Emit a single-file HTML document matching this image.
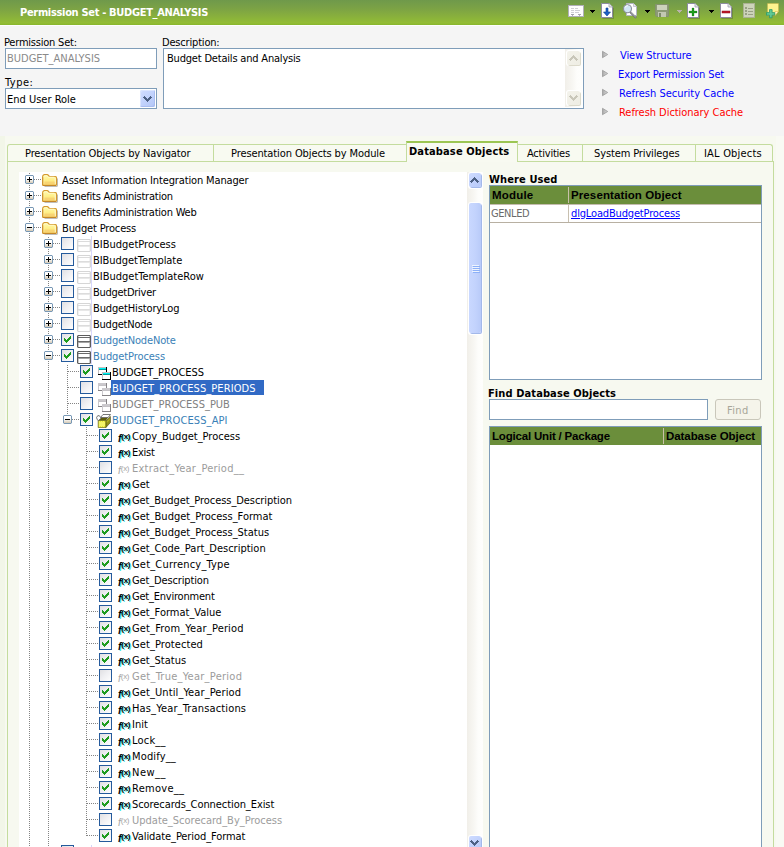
<!DOCTYPE html><html><head><meta charset="utf-8"><title>Permission Set</title><style>
*{box-sizing:border-box;margin:0;padding:0}
html,body{width:784px;height:847px;overflow:hidden}
body{background:#f5f5f5;font-family:"DejaVu Sans Condensed","Liberation Sans",sans-serif;font-size:11px;color:#000;position:relative;line-height:16px}
.a{position:absolute;white-space:nowrap}
.t{position:absolute;white-space:nowrap;height:18px;line-height:18px}
.b{font-weight:bold}
.ar{font-family:"Liberation Sans",sans-serif;font-weight:bold;font-size:11.5px}
#hdr{left:0;top:0;width:784px;height:25px;background:linear-gradient(#6f994b 0%,#7aa146 30%,#86ad3e 60%,#93bd35 92%,#88b62c 100%)}
#hline{left:0;top:25px;width:784px;height:1px;background:#fdfdfd}
#cream{left:0;top:136px;width:784px;height:711px;background:#f7f9f0}
#lstrip{left:0;top:136px;width:5px;height:711px;background:#f2f6e8}
#rstrip{left:776px;top:136px;width:8px;height:711px;background:#f9faf4}
.inp{position:absolute;border:1px solid #7f9db9;background:#fff}
.tab{position:absolute;top:144px;height:17px;border:1px solid #c4dc9e;border-bottom:none;background:#f8faf1}
#panel{left:7px;top:161px;width:767px;height:700px;border:1px solid #c4dc9e;background:#f7f9f0}
#tree{left:19px;top:172px;width:449px;height:675px;background:#fff;overflow:hidden}
.fx{font-family:"Liberation Sans",sans-serif;font-weight:bold;height:12px;line-height:12px}
.ff{font-size:10px;font-weight:bold;font-style:italic;display:inline-block;transform:translateY(1px)}
.fp{font-size:8px;letter-spacing:-0.3px;display:inline-block;transform:translateY(-2px)}
.fx0,.fx0 .ff,.fx0 .fp{font-weight:normal}
.th{position:absolute;background:#6b8e3b;height:18px}
</style></head><body><div class="a" id="hdr"></div><div class="a" id="hline"></div>
<div class="t b" id="title" style="left:20px;top:4px;letter-spacing:-0.322px;color:#fff">Permission Set - BUDGET_ANALYSIS</div>
<svg class="a" style="left:568px;top:5px" width="16" height="12" viewBox="0 0 16 12" ><rect x="0.5" y="0.5" width="15" height="11" fill="#fdfdfd" stroke="#b0b0b8"/><path d="M3 3.5h3M7 3.5h3M3 5.5h3M7 5.5h5M3 7.5h3M7 7.5h4" stroke="#cfcfd4" stroke-width="1"/><path d="M3 9.5h3M10 9.5h3" stroke="#a4a4ac" stroke-width="1"/><path d="M4 10h1v1.5h-1zM11 10h1v1.5h-1z" fill="#b0b0b8"/></svg>
<svg class="a" style="left:590px;top:10px" width="5" height="3" viewBox="0 0 5 3" shape-rendering="crispEdges"><path d="M0 0h5v1h-5zM1 1h3v1h-3zM2 2h1v1h-1z" fill="#000"/></svg>
<svg class="a" style="left:601px;top:3px" width="13" height="16" viewBox="0 0 13 16" ><path d="M1.5 15.6 H12.6 V5" fill="none" stroke="#5a6a3a" stroke-opacity="0.5" stroke-width="1"/><path d="M0.5 0.5 H8 L11.5 4 V14.5 H0.5 Z" fill="#fff" stroke="#8c8ca0" stroke-width="1"/><path d="M8 0.5 V4 H11.5" fill="#e4e4ec" stroke="#a0a0b0" stroke-width="0.8"/><path d="M5 5 H7 V9 H9.5 L6 13 L2.5 9 H5 Z" fill="#1c5fc4" stroke="#0e3f94" stroke-width="0.6"/></svg>
<svg class="a" style="left:622px;top:2px" width="16" height="17" viewBox="0 0 16 17" ><path d="M4.5 1.5 H11.5 L14.5 4.5 V13.5 H4.5 Z" fill="#fff" stroke="#b4b4c2" stroke-width="1"/><path d="M11.5 1.5 V4.5 H14.5" fill="#e8e8ee" stroke="#b4b4c2" stroke-width="0.7"/><path d="M8.4 10.2 L13.6 15.4" stroke="#70707a" stroke-width="2" stroke-linecap="round"/><path d="M8.8 10.2 L13.4 14.8" stroke="#d0d0d4" stroke-width="0.8" stroke-linecap="round"/><circle cx="5.5" cy="6.7" r="4" fill="#d2e6f4" stroke="#8a8f98" stroke-width="1.1"/><path d="M3.1 5.6 A2.8 2.8 0 0 1 5.9 3.6" fill="none" stroke="#fff" stroke-width="1"/></svg>
<svg class="a" style="left:645px;top:10px" width="5" height="3" viewBox="0 0 5 3" shape-rendering="crispEdges"><path d="M0 0h5v1h-5zM1 1h3v1h-3zM2 2h1v1h-1z" fill="#000"/></svg>
<svg class="a" style="left:655px;top:4px" width="14" height="13" viewBox="0 0 14 13" ><path d="M0.5 0.5 H13.5 V12.5 H1.5 L0.5 11.5 Z" fill="#8c9a76" stroke="#84926e"/><rect x="2" y="1" width="10" height="5" fill="#ccd2bc"/><rect x="3" y="8" width="8" height="5" fill="#c2c8b2"/><rect x="4" y="9" width="2" height="4" fill="#7c8a68"/></svg>
<svg class="a" style="left:677px;top:10px" width="5" height="3" viewBox="0 0 5 3" shape-rendering="crispEdges"><path d="M0 0h5v1h-5zM1 1h3v1h-3zM2 2h1v1h-1z" fill="#b9b3a9"/></svg>
<svg class="a" style="left:687px;top:3px" width="13" height="16" viewBox="0 0 13 16" ><path d="M1.5 15.6 H12.6 V5" fill="none" stroke="#5a6a3a" stroke-opacity="0.5" stroke-width="1"/><path d="M0.5 0.5 H8 L11.5 4 V14.5 H0.5 Z" fill="#fff" stroke="#8c8ca0" stroke-width="1"/><path d="M8 0.5 V4 H11.5" fill="#e4e4ec" stroke="#a0a0b0" stroke-width="0.8"/><path d="M5 5h2v3h3v2h-3v3h-2v-3h-3v-2h3z" fill="#1f9a1f" stroke="#0c6a0c" stroke-width="0.25"/></svg>
<svg class="a" style="left:709px;top:10px" width="5" height="3" viewBox="0 0 5 3" shape-rendering="crispEdges"><path d="M0 0h5v1h-5zM1 1h3v1h-3zM2 2h1v1h-1z" fill="#000"/></svg>
<svg class="a" style="left:720px;top:3px" width="13" height="16" viewBox="0 0 13 16" ><path d="M1.5 15.6 H12.6 V5" fill="none" stroke="#5a6a3a" stroke-opacity="0.5" stroke-width="1"/><path d="M0.5 0.5 H8 L11.5 4 V14.5 H0.5 Z" fill="#fff" stroke="#8c8ca0" stroke-width="1"/><path d="M8 0.5 V4 H11.5" fill="#e4e4ec" stroke="#a0a0b0" stroke-width="0.8"/><rect x="2" y="8" width="8" height="2" fill="#c0182c" stroke="#8a0c1a" stroke-width="0.5"/></svg>
<svg class="a" style="left:743px;top:3px" width="12" height="15" viewBox="0 0 12 15" ><rect x="0.5" y="0.5" width="11" height="14" fill="#cdd3ba" stroke="#aab292"/><path d="M2 4h2v2h-2zM2 7h2v2h-2zM2 10h2v2h-2z" fill="#98a084"/><path d="M5 5.5h5M5 8.5h5M5 11.5h5" stroke="#98a084" stroke-width="1"/></svg>
<svg class="a" style="left:765px;top:2px" width="15" height="17" viewBox="0 0 15 17" ><path d="M2.5 1.5 H13.5 V9.5 L10 13.5 H2.5 Z" fill="#fdf38e" stroke="#c8b040" stroke-opacity="0.5" stroke-width="0.8"/><path d="M13.5 9.5 H10 V13.5 Z" fill="#fffbd0" stroke="#d4b030" stroke-width="0.5"/><path d="M2.5 13.6 H9.5" stroke="#e0a030" stroke-width="1"/><path d="M4.5 7.6 h2.6 v3 h2.6 v2.6 h-2.6 v2.6 h-2.6 v-2.6 h-3 v-2.6 h3 z" fill="#62c894" stroke="#2f9a68" stroke-width="0.8"/></svg>
<div class="a" id="cream"></div><div class="a" id="lstrip"></div><div class="a" id="rstrip"></div>
<div class="t " id="l1" style="left:4px;top:34px;letter-spacing:-0.214px;">Permission Set:</div>
<div class="inp" style="left:5px;top:48px;width:152px;height:21px"></div>
<div class="t " id="v1" style="left:7px;top:50px;color:#8a8a8a">BUDGET_ANALYSIS</div>
<div class="t " id="l2" style="left:5px;top:74px;letter-spacing:0.5px;">Type:</div>
<div class="inp" style="left:5px;top:88px;width:152px;height:21px"></div>
<div class="t " id="v2" style="left:7px;top:91px;">End User Role</div>
<div class="a" style="left:140px;top:90px;width:15px;height:17px;border-radius:2px;background:linear-gradient(135deg,#d0dcff,#c3d3fd 45%,#b3c6f6);box-shadow:inset -1px -1px 0 #a9bdf0,inset 1px 1px 0 #dbe5ff"></div>
<svg class="a" style="left:143px;top:96px" width="9" height="6" shape-rendering="crispEdges"><path d="M1 0h1v1h-1zM7 0h1v1h-1zM0 1h3v1h-3zM6 1h3v1h-3zM1 2h3v1h-3zM5 2h3v1h-3zM2 3h5v1h-5zM3 4h3v1h-3zM4 5h1v1h-1z" fill="#4d6185"/></svg>
<div class="t " id="l3" style="left:162px;top:34px;letter-spacing:-0.182px;">Description:</div>
<div class="inp" style="left:163px;top:48px;width:421px;height:61px"></div>
<div class="a" style="left:565px;top:49px;width:17px;height:58px;background:linear-gradient(90deg,#f1efe9,#f7f6f2 40%,#fdfdfb 70%,#fefefc)"></div>
<div class="a" style="left:566px;top:50px;width:15px;height:16px;background:#fff;border-radius:3px"></div>
<div class="a" style="left:567px;top:51px;width:13px;height:14px;border-radius:2px;background:linear-gradient(135deg,#f4f3ec,#eeede3);box-shadow:1px 1px 0 #dcdacb"></div>
<svg class="a" style="left:569px;top:55px" width="9" height="6" shape-rendering="crispEdges"><path d="M4 0h1v1h-1zM3 1h3v1h-3zM2 2h5v1h-5zM1 3h3v1h-3zM5 3h3v1h-3zM0 4h3v1h-3zM6 4h3v1h-3zM1 5h1v1h-1zM7 5h1v1h-1z" fill="#c9c7ba"/></svg>
<div class="a" style="left:566px;top:90px;width:15px;height:16px;background:#fff;border-radius:3px"></div>
<div class="a" style="left:567px;top:91px;width:13px;height:14px;border-radius:2px;background:linear-gradient(135deg,#f4f3ec,#eeede3);box-shadow:1px 1px 0 #dcdacb"></div>
<svg class="a" style="left:569px;top:95px" width="9" height="6" shape-rendering="crispEdges"><path d="M1 0h1v1h-1zM7 0h1v1h-1zM0 1h3v1h-3zM6 1h3v1h-3zM1 2h3v1h-3zM5 2h3v1h-3zM2 3h5v1h-5zM3 4h3v1h-3zM4 5h1v1h-1z" fill="#c9c7ba"/></svg>
<div class="t " id="v3" style="left:167px;top:50px;letter-spacing:-0.192px;">Budget Details and Analysis</div>
<div class="t " id="lk0" style="left:620px;top:47px;letter-spacing:-0.077px;color:#0000ff">View Structure</div>
<svg class="a" style="left:602px;top:50px" width="7" height="9"><defs><linearGradient id="tg0" x1="0" y1="0" x2="1" y2="0"><stop offset="0" stop-color="#a8a8a8"/><stop offset="1" stop-color="#dcdcdc"/></linearGradient></defs><path d="M0.5 1.3 L5.7 4.5 L0.5 7.7 Z" fill="url(#tg0)" stroke="#9a9a9a" stroke-width="0.8"/></svg>
<div class="t " id="lk1" style="left:618px;top:66px;letter-spacing:-0.1px;color:#0000ff">Export Permission Set</div>
<svg class="a" style="left:602px;top:69px" width="7" height="9"><defs><linearGradient id="tg1" x1="0" y1="0" x2="1" y2="0"><stop offset="0" stop-color="#a8a8a8"/><stop offset="1" stop-color="#dcdcdc"/></linearGradient></defs><path d="M0.5 1.3 L5.7 4.5 L0.5 7.7 Z" fill="url(#tg1)" stroke="#9a9a9a" stroke-width="0.8"/></svg>
<div class="t " id="lk2" style="left:619px;top:85px;color:#0000ff">Refresh Security Cache</div>
<svg class="a" style="left:602px;top:88px" width="7" height="9"><defs><linearGradient id="tg2" x1="0" y1="0" x2="1" y2="0"><stop offset="0" stop-color="#a8a8a8"/><stop offset="1" stop-color="#dcdcdc"/></linearGradient></defs><path d="M0.5 1.3 L5.7 4.5 L0.5 7.7 Z" fill="url(#tg2)" stroke="#9a9a9a" stroke-width="0.8"/></svg>
<div class="t " id="lk3" style="left:619px;top:104px;letter-spacing:-0.043px;color:#ff0000">Refresh Dictionary Cache</div>
<svg class="a" style="left:602px;top:107px" width="7" height="9"><defs><linearGradient id="tg3" x1="0" y1="0" x2="1" y2="0"><stop offset="0" stop-color="#a8a8a8"/><stop offset="1" stop-color="#dcdcdc"/></linearGradient></defs><path d="M0.5 1.3 L5.7 4.5 L0.5 7.7 Z" fill="url(#tg3)" stroke="#9a9a9a" stroke-width="0.8"/></svg>
<div class="a" id="panel"></div>
<div class="tab" style="left:7px;width:207px;border-top-left-radius:3px;"></div>
<div class="t " id="tab0" style="left:25px;top:145px;letter-spacing:-0.125px;">Presentation Objects by Navigator</div>
<div class="tab" style="left:213px;width:194px;"></div>
<div class="t " id="tab1" style="left:231px;top:145px;letter-spacing:-0.103px;">Presentation Objects by Module</div>
<div class="tab" style="left:406px;width:112px;top:141px;height:21px;border-top:2px solid #9cc653;background:#f8faf1"></div>
<div class="t b" id="tab2" style="left:409px;top:143px;letter-spacing:0.133px;">Database Objects</div>
<div class="tab" style="left:517px;width:66px;"></div>
<div class="t " id="tab3" style="left:527px;top:145px;letter-spacing:-0.222px;">Activities</div>
<div class="tab" style="left:582px;width:114px;"></div>
<div class="t " id="tab4" style="left:594px;top:145px;letter-spacing:-0.125px;">System Privileges</div>
<div class="tab" style="left:695px;width:78px;border-top-right-radius:3px;"></div>
<div class="t " id="tab5" style="left:704px;top:145px;letter-spacing:0.2px;">IAL Objects</div>
<div class="a" id="tree"></div>
<svg class="a" style="left:19px;top:172px" width="449" height="675" shape-rendering="crispEdges"><defs><linearGradient id="cbg" x1="0" y1="0" x2="1" y2="1"><stop offset="0" stop-color="#dedee2"/><stop offset="0.5" stop-color="#f0f0f3"/><stop offset="1" stop-color="#ffffff"/></linearGradient><linearGradient id="fg" x1="0" y1="0" x2="0" y2="1"><stop offset="0" stop-color="#fffbb4"/><stop offset="0.5" stop-color="#fff08a"/><stop offset="1" stop-color="#f8d468"/></linearGradient><linearGradient id="fg2" x1="0" y1="0" x2="0" y2="1"><stop offset="0" stop-color="#fff9b8"/><stop offset="0.55" stop-color="#fdea80"/><stop offset="0.6" stop-color="#f9d77a"/><stop offset="1" stop-color="#f7d070"/></linearGradient></defs><g stroke="#848484" stroke-width="1" stroke-dasharray="1 1" fill="none"><path d="M10.5 1v673"/><path d="M29.5 65v609"/><path d="M48.5 193v49"/><path d="M67.5 255v409"/><path d="M15 7.5h7"/><path d="M15 23.5h7"/><path d="M15 39.5h7"/><path d="M15 55.5h7"/><path d="M34 71.5h7"/><path d="M34 87.5h7"/><path d="M34 103.5h7"/><path d="M34 119.5h7"/><path d="M34 135.5h7"/><path d="M34 151.5h7"/><path d="M34 167.5h7"/><path d="M34 183.5h7"/><path d="M49 199.5h11"/><path d="M49 215.5h11"/><path d="M49 231.5h11"/><path d="M53 247.5h7"/><path d="M68 263.5h11"/><path d="M68 279.5h11"/><path d="M68 295.5h11"/><path d="M68 311.5h11"/><path d="M68 327.5h11"/><path d="M68 343.5h11"/><path d="M68 359.5h11"/><path d="M68 375.5h11"/><path d="M68 391.5h11"/><path d="M68 407.5h11"/><path d="M68 423.5h11"/><path d="M68 439.5h11"/><path d="M68 455.5h11"/><path d="M68 471.5h11"/><path d="M68 487.5h11"/><path d="M68 503.5h11"/><path d="M68 519.5h11"/><path d="M68 535.5h11"/><path d="M68 551.5h11"/><path d="M68 567.5h11"/><path d="M68 583.5h11"/><path d="M68 599.5h11"/><path d="M68 615.5h11"/><path d="M68 631.5h11"/><path d="M68 647.5h11"/><path d="M68 663.5h11"/></g></svg>
<div class="a" style="left:91px;top:236px;width:1px;height:128px;background:#d6d6fa"></div>
<svg class="a" style="left:25px;top:175px" width="9" height="9" shape-rendering="crispEdges"><rect x="0" y="0" width="9" height="9" fill="#fff"/><rect x="1" y="1" width="7" height="3" fill="#ffffff"/><rect x="1" y="4" width="7" height="1" fill="#f7f5f0"/><rect x="1" y="5" width="7" height="1" fill="#efebe3"/><rect x="1" y="6" width="7" height="1" fill="#e4ddd0"/><rect x="1" y="7" width="7" height="1" fill="#d9cfbe"/><rect x="1" y="0" width="7" height="1" fill="#7898b5"/><rect x="1" y="8" width="7" height="1" fill="#7898b5"/><rect x="0" y="1" width="1" height="7" fill="#7898b5"/><rect x="8" y="1" width="1" height="7" fill="#7898b5"/><rect x="0" y="0" width="1" height="1" fill="#d0dbe6"/><rect x="8" y="0" width="1" height="1" fill="#d0dbe6"/><rect x="0" y="8" width="1" height="1" fill="#d0dbe6"/><rect x="8" y="8" width="1" height="1" fill="#d0dbe6"/><rect x="2" y="4" width="5" height="1" fill="#000"/><rect x="4" y="2" width="1" height="5" fill="#000"/></svg>
<svg class="a" style="left:42px;top:174px" width="17" height="14" viewBox="0 0 17 14">
<path d="M2.5 12.5 H15 M15.5 4.5 V12.5" fill="none" stroke="#7c7c7c" stroke-opacity="0.5" stroke-width="1"/>
<path d="M0.6 3 Q0.6 1 2.2 0.6 H5.3 Q6.2 0.7 6.7 1.6 L7.2 2.5 H13.4 Q14.5 2.6 14.5 3.7 V10.6 Q14.4 11.5 13.6 11.5 H1.6 Q0.6 11.5 0.6 10.5 Z" fill="url(#fg)" stroke="#d49a30" stroke-width="1.2"/>
<path d="M1.9 2.6 Q2 1.8 2.8 1.7 H5 L6.2 3.2 H12.5" fill="none" stroke="#fffbd0" stroke-width="0.9"/>
<path d="M1.8 3.5 V10.4" stroke="#fff6b0" stroke-width="0.9"/>
<path d="M13.2 4.2 V10.4" stroke="#fffce0" stroke-width="0.9"/>
<rect x="2.4" y="7.6" width="10.3" height="2.8" fill="#f7cf72" fill-opacity="0.75"/>
<path d="M1 11.4 H14" stroke="#c4862a" stroke-width="1.1"/>
<path d="M0.7 3.5 V10.5" stroke="#cf9430" stroke-width="1.2"/>
</svg>
<div class="t tx" style="left:62px;top:172px;color:#000;letter-spacing:-0.139px">Asset Information Integration Manager</div>
<svg class="a" style="left:25px;top:191px" width="9" height="9" shape-rendering="crispEdges"><rect x="0" y="0" width="9" height="9" fill="#fff"/><rect x="1" y="1" width="7" height="3" fill="#ffffff"/><rect x="1" y="4" width="7" height="1" fill="#f7f5f0"/><rect x="1" y="5" width="7" height="1" fill="#efebe3"/><rect x="1" y="6" width="7" height="1" fill="#e4ddd0"/><rect x="1" y="7" width="7" height="1" fill="#d9cfbe"/><rect x="1" y="0" width="7" height="1" fill="#7898b5"/><rect x="1" y="8" width="7" height="1" fill="#7898b5"/><rect x="0" y="1" width="1" height="7" fill="#7898b5"/><rect x="8" y="1" width="1" height="7" fill="#7898b5"/><rect x="0" y="0" width="1" height="1" fill="#d0dbe6"/><rect x="8" y="0" width="1" height="1" fill="#d0dbe6"/><rect x="0" y="8" width="1" height="1" fill="#d0dbe6"/><rect x="8" y="8" width="1" height="1" fill="#d0dbe6"/><rect x="2" y="4" width="5" height="1" fill="#000"/><rect x="4" y="2" width="1" height="5" fill="#000"/></svg>
<svg class="a" style="left:42px;top:190px" width="17" height="14" viewBox="0 0 17 14">
<path d="M2.5 12.5 H15 M15.5 4.5 V12.5" fill="none" stroke="#7c7c7c" stroke-opacity="0.5" stroke-width="1"/>
<path d="M0.6 3 Q0.6 1 2.2 0.6 H5.3 Q6.2 0.7 6.7 1.6 L7.2 2.5 H13.4 Q14.5 2.6 14.5 3.7 V10.6 Q14.4 11.5 13.6 11.5 H1.6 Q0.6 11.5 0.6 10.5 Z" fill="url(#fg)" stroke="#d49a30" stroke-width="1.2"/>
<path d="M1.9 2.6 Q2 1.8 2.8 1.7 H5 L6.2 3.2 H12.5" fill="none" stroke="#fffbd0" stroke-width="0.9"/>
<path d="M1.8 3.5 V10.4" stroke="#fff6b0" stroke-width="0.9"/>
<path d="M13.2 4.2 V10.4" stroke="#fffce0" stroke-width="0.9"/>
<rect x="2.4" y="7.6" width="10.3" height="2.8" fill="#f7cf72" fill-opacity="0.75"/>
<path d="M1 11.4 H14" stroke="#c4862a" stroke-width="1.1"/>
<path d="M0.7 3.5 V10.5" stroke="#cf9430" stroke-width="1.2"/>
</svg>
<div class="t tx" style="left:62px;top:188px;color:#000;letter-spacing:-0.227px">Benefits Administration</div>
<svg class="a" style="left:25px;top:207px" width="9" height="9" shape-rendering="crispEdges"><rect x="0" y="0" width="9" height="9" fill="#fff"/><rect x="1" y="1" width="7" height="3" fill="#ffffff"/><rect x="1" y="4" width="7" height="1" fill="#f7f5f0"/><rect x="1" y="5" width="7" height="1" fill="#efebe3"/><rect x="1" y="6" width="7" height="1" fill="#e4ddd0"/><rect x="1" y="7" width="7" height="1" fill="#d9cfbe"/><rect x="1" y="0" width="7" height="1" fill="#7898b5"/><rect x="1" y="8" width="7" height="1" fill="#7898b5"/><rect x="0" y="1" width="1" height="7" fill="#7898b5"/><rect x="8" y="1" width="1" height="7" fill="#7898b5"/><rect x="0" y="0" width="1" height="1" fill="#d0dbe6"/><rect x="8" y="0" width="1" height="1" fill="#d0dbe6"/><rect x="0" y="8" width="1" height="1" fill="#d0dbe6"/><rect x="8" y="8" width="1" height="1" fill="#d0dbe6"/><rect x="2" y="4" width="5" height="1" fill="#000"/><rect x="4" y="2" width="1" height="5" fill="#000"/></svg>
<svg class="a" style="left:42px;top:206px" width="17" height="14" viewBox="0 0 17 14">
<path d="M2.5 12.5 H15 M15.5 4.5 V12.5" fill="none" stroke="#7c7c7c" stroke-opacity="0.5" stroke-width="1"/>
<path d="M0.6 3 Q0.6 1 2.2 0.6 H5.3 Q6.2 0.7 6.7 1.6 L7.2 2.5 H13.4 Q14.5 2.6 14.5 3.7 V10.6 Q14.4 11.5 13.6 11.5 H1.6 Q0.6 11.5 0.6 10.5 Z" fill="url(#fg)" stroke="#d49a30" stroke-width="1.2"/>
<path d="M1.9 2.6 Q2 1.8 2.8 1.7 H5 L6.2 3.2 H12.5" fill="none" stroke="#fffbd0" stroke-width="0.9"/>
<path d="M1.8 3.5 V10.4" stroke="#fff6b0" stroke-width="0.9"/>
<path d="M13.2 4.2 V10.4" stroke="#fffce0" stroke-width="0.9"/>
<rect x="2.4" y="7.6" width="10.3" height="2.8" fill="#f7cf72" fill-opacity="0.75"/>
<path d="M1 11.4 H14" stroke="#c4862a" stroke-width="1.1"/>
<path d="M0.7 3.5 V10.5" stroke="#cf9430" stroke-width="1.2"/>
</svg>
<div class="t tx" style="left:62px;top:204px;color:#000;letter-spacing:-0.231px">Benefits Administration Web</div>
<svg class="a" style="left:25px;top:223px" width="9" height="9" shape-rendering="crispEdges"><rect x="0" y="0" width="9" height="9" fill="#fff"/><rect x="1" y="1" width="7" height="3" fill="#ffffff"/><rect x="1" y="4" width="7" height="1" fill="#f7f5f0"/><rect x="1" y="5" width="7" height="1" fill="#efebe3"/><rect x="1" y="6" width="7" height="1" fill="#e4ddd0"/><rect x="1" y="7" width="7" height="1" fill="#d9cfbe"/><rect x="1" y="0" width="7" height="1" fill="#7898b5"/><rect x="1" y="8" width="7" height="1" fill="#7898b5"/><rect x="0" y="1" width="1" height="7" fill="#7898b5"/><rect x="8" y="1" width="1" height="7" fill="#7898b5"/><rect x="0" y="0" width="1" height="1" fill="#d0dbe6"/><rect x="8" y="0" width="1" height="1" fill="#d0dbe6"/><rect x="0" y="8" width="1" height="1" fill="#d0dbe6"/><rect x="8" y="8" width="1" height="1" fill="#d0dbe6"/><rect x="2" y="4" width="5" height="1" fill="#000"/></svg>
<svg class="a" style="left:42px;top:222px" width="17" height="14" viewBox="0 0 17 14">
<path d="M2.5 12.5 H15 M15.5 4.5 V12.5" fill="none" stroke="#7c7c7c" stroke-opacity="0.5" stroke-width="1"/>
<path d="M0.6 3 Q0.6 1 2.2 0.6 H5.3 Q6.2 0.7 6.7 1.6 L7.2 2.5 H13.4 Q14.5 2.6 14.5 3.7 V10.6 Q14.4 11.5 13.6 11.5 H1.6 Q0.6 11.5 0.6 10.5 Z" fill="url(#fg)" stroke="#d49a30" stroke-width="1.2"/>
<path d="M1.9 2.6 Q2 1.8 2.8 1.7 H5 L6.2 3.2 H12.5" fill="none" stroke="#fffbd0" stroke-width="0.9"/>
<path d="M1.8 3.5 V10.4" stroke="#fff6b0" stroke-width="0.9"/>
<path d="M13.2 4.2 V10.4" stroke="#fffce0" stroke-width="0.9"/>
<rect x="2.4" y="7.6" width="10.3" height="2.8" fill="#f7cf72" fill-opacity="0.75"/>
<path d="M1 11.4 H14" stroke="#c4862a" stroke-width="1.1"/>
<path d="M0.7 3.5 V10.5" stroke="#cf9430" stroke-width="1.2"/>
</svg>
<div class="t tx" style="left:62px;top:220px;color:#000;letter-spacing:-0.154px">Budget Process</div>
<svg class="a" style="left:44px;top:239px" width="9" height="9" shape-rendering="crispEdges"><rect x="0" y="0" width="9" height="9" fill="#fff"/><rect x="1" y="1" width="7" height="3" fill="#ffffff"/><rect x="1" y="4" width="7" height="1" fill="#f7f5f0"/><rect x="1" y="5" width="7" height="1" fill="#efebe3"/><rect x="1" y="6" width="7" height="1" fill="#e4ddd0"/><rect x="1" y="7" width="7" height="1" fill="#d9cfbe"/><rect x="1" y="0" width="7" height="1" fill="#7898b5"/><rect x="1" y="8" width="7" height="1" fill="#7898b5"/><rect x="0" y="1" width="1" height="7" fill="#7898b5"/><rect x="8" y="1" width="1" height="7" fill="#7898b5"/><rect x="0" y="0" width="1" height="1" fill="#d0dbe6"/><rect x="8" y="0" width="1" height="1" fill="#d0dbe6"/><rect x="0" y="8" width="1" height="1" fill="#d0dbe6"/><rect x="8" y="8" width="1" height="1" fill="#d0dbe6"/><rect x="2" y="4" width="5" height="1" fill="#000"/><rect x="4" y="2" width="1" height="5" fill="#000"/></svg>
<svg class="a" style="left:61px;top:237px" width="13" height="13" shape-rendering="crispEdges"><rect x="0.5" y="0.5" width="12" height="12" fill="url(#cbg)" stroke="#245a9c"/></svg>
<svg class="a" style="left:77px;top:239px" width="14" height="13" shape-rendering="crispEdges"><rect x="0" y="0" width="14" height="13" fill="#d6d6d6"/><rect x="1" y="1" width="12" height="11" fill="#fff"/><rect x="1" y="1" width="1" height="11" fill="#f2f2f2"/><rect x="12" y="1" width="1" height="11" fill="#f2f2f2"/><rect x="1" y="2" width="12" height="1" fill="#dcdcdc"/><rect x="1" y="6" width="12" height="1" fill="#dcdcdc"/><rect x="1" y="7" width="12" height="1" fill="#e8e8e8"/><rect x="0" y="0" width="1" height="1" fill="#ececec"/><rect x="13" y="0" width="1" height="1" fill="#ececec"/><rect x="0" y="12" width="1" height="1" fill="#ececec"/><rect x="13" y="12" width="1" height="1" fill="#ececec"/></svg>
<div class="t tx" style="left:93px;top:236px;color:#000">BIBudgetProcess</div>
<svg class="a" style="left:44px;top:255px" width="9" height="9" shape-rendering="crispEdges"><rect x="0" y="0" width="9" height="9" fill="#fff"/><rect x="1" y="1" width="7" height="3" fill="#ffffff"/><rect x="1" y="4" width="7" height="1" fill="#f7f5f0"/><rect x="1" y="5" width="7" height="1" fill="#efebe3"/><rect x="1" y="6" width="7" height="1" fill="#e4ddd0"/><rect x="1" y="7" width="7" height="1" fill="#d9cfbe"/><rect x="1" y="0" width="7" height="1" fill="#7898b5"/><rect x="1" y="8" width="7" height="1" fill="#7898b5"/><rect x="0" y="1" width="1" height="7" fill="#7898b5"/><rect x="8" y="1" width="1" height="7" fill="#7898b5"/><rect x="0" y="0" width="1" height="1" fill="#d0dbe6"/><rect x="8" y="0" width="1" height="1" fill="#d0dbe6"/><rect x="0" y="8" width="1" height="1" fill="#d0dbe6"/><rect x="8" y="8" width="1" height="1" fill="#d0dbe6"/><rect x="2" y="4" width="5" height="1" fill="#000"/><rect x="4" y="2" width="1" height="5" fill="#000"/></svg>
<svg class="a" style="left:61px;top:253px" width="13" height="13" shape-rendering="crispEdges"><rect x="0.5" y="0.5" width="12" height="12" fill="url(#cbg)" stroke="#245a9c"/></svg>
<svg class="a" style="left:77px;top:255px" width="14" height="13" shape-rendering="crispEdges"><rect x="0" y="0" width="14" height="13" fill="#d6d6d6"/><rect x="1" y="1" width="12" height="11" fill="#fff"/><rect x="1" y="1" width="1" height="11" fill="#f2f2f2"/><rect x="12" y="1" width="1" height="11" fill="#f2f2f2"/><rect x="1" y="2" width="12" height="1" fill="#dcdcdc"/><rect x="1" y="6" width="12" height="1" fill="#dcdcdc"/><rect x="1" y="7" width="12" height="1" fill="#e8e8e8"/><rect x="0" y="0" width="1" height="1" fill="#ececec"/><rect x="13" y="0" width="1" height="1" fill="#ececec"/><rect x="0" y="12" width="1" height="1" fill="#ececec"/><rect x="13" y="12" width="1" height="1" fill="#ececec"/></svg>
<div class="t tx" style="left:93px;top:252px;color:#000;letter-spacing:-0.067px">BIBudgetTemplate</div>
<svg class="a" style="left:44px;top:271px" width="9" height="9" shape-rendering="crispEdges"><rect x="0" y="0" width="9" height="9" fill="#fff"/><rect x="1" y="1" width="7" height="3" fill="#ffffff"/><rect x="1" y="4" width="7" height="1" fill="#f7f5f0"/><rect x="1" y="5" width="7" height="1" fill="#efebe3"/><rect x="1" y="6" width="7" height="1" fill="#e4ddd0"/><rect x="1" y="7" width="7" height="1" fill="#d9cfbe"/><rect x="1" y="0" width="7" height="1" fill="#7898b5"/><rect x="1" y="8" width="7" height="1" fill="#7898b5"/><rect x="0" y="1" width="1" height="7" fill="#7898b5"/><rect x="8" y="1" width="1" height="7" fill="#7898b5"/><rect x="0" y="0" width="1" height="1" fill="#d0dbe6"/><rect x="8" y="0" width="1" height="1" fill="#d0dbe6"/><rect x="0" y="8" width="1" height="1" fill="#d0dbe6"/><rect x="8" y="8" width="1" height="1" fill="#d0dbe6"/><rect x="2" y="4" width="5" height="1" fill="#000"/><rect x="4" y="2" width="1" height="5" fill="#000"/></svg>
<svg class="a" style="left:61px;top:269px" width="13" height="13" shape-rendering="crispEdges"><rect x="0.5" y="0.5" width="12" height="12" fill="url(#cbg)" stroke="#245a9c"/></svg>
<svg class="a" style="left:77px;top:271px" width="14" height="13" shape-rendering="crispEdges"><rect x="0" y="0" width="14" height="13" fill="#d6d6d6"/><rect x="1" y="1" width="12" height="11" fill="#fff"/><rect x="1" y="1" width="1" height="11" fill="#f2f2f2"/><rect x="12" y="1" width="1" height="11" fill="#f2f2f2"/><rect x="1" y="2" width="12" height="1" fill="#dcdcdc"/><rect x="1" y="6" width="12" height="1" fill="#dcdcdc"/><rect x="1" y="7" width="12" height="1" fill="#e8e8e8"/><rect x="0" y="0" width="1" height="1" fill="#ececec"/><rect x="13" y="0" width="1" height="1" fill="#ececec"/><rect x="0" y="12" width="1" height="1" fill="#ececec"/><rect x="13" y="12" width="1" height="1" fill="#ececec"/></svg>
<div class="t tx" style="left:93px;top:268px;color:#000">BIBudgetTemplateRow</div>
<svg class="a" style="left:44px;top:287px" width="9" height="9" shape-rendering="crispEdges"><rect x="0" y="0" width="9" height="9" fill="#fff"/><rect x="1" y="1" width="7" height="3" fill="#ffffff"/><rect x="1" y="4" width="7" height="1" fill="#f7f5f0"/><rect x="1" y="5" width="7" height="1" fill="#efebe3"/><rect x="1" y="6" width="7" height="1" fill="#e4ddd0"/><rect x="1" y="7" width="7" height="1" fill="#d9cfbe"/><rect x="1" y="0" width="7" height="1" fill="#7898b5"/><rect x="1" y="8" width="7" height="1" fill="#7898b5"/><rect x="0" y="1" width="1" height="7" fill="#7898b5"/><rect x="8" y="1" width="1" height="7" fill="#7898b5"/><rect x="0" y="0" width="1" height="1" fill="#d0dbe6"/><rect x="8" y="0" width="1" height="1" fill="#d0dbe6"/><rect x="0" y="8" width="1" height="1" fill="#d0dbe6"/><rect x="8" y="8" width="1" height="1" fill="#d0dbe6"/><rect x="2" y="4" width="5" height="1" fill="#000"/><rect x="4" y="2" width="1" height="5" fill="#000"/></svg>
<svg class="a" style="left:61px;top:285px" width="13" height="13" shape-rendering="crispEdges"><rect x="0.5" y="0.5" width="12" height="12" fill="url(#cbg)" stroke="#245a9c"/></svg>
<svg class="a" style="left:77px;top:287px" width="14" height="13" shape-rendering="crispEdges"><rect x="0" y="0" width="14" height="13" fill="#d6d6d6"/><rect x="1" y="1" width="12" height="11" fill="#fff"/><rect x="1" y="1" width="1" height="11" fill="#f2f2f2"/><rect x="12" y="1" width="1" height="11" fill="#f2f2f2"/><rect x="1" y="2" width="12" height="1" fill="#dcdcdc"/><rect x="1" y="6" width="12" height="1" fill="#dcdcdc"/><rect x="1" y="7" width="12" height="1" fill="#e8e8e8"/><rect x="0" y="0" width="1" height="1" fill="#ececec"/><rect x="13" y="0" width="1" height="1" fill="#ececec"/><rect x="0" y="12" width="1" height="1" fill="#ececec"/><rect x="13" y="12" width="1" height="1" fill="#ececec"/></svg>
<div class="t tx" style="left:93px;top:284px;color:#000;letter-spacing:-0.273px">BudgetDriver</div>
<svg class="a" style="left:44px;top:303px" width="9" height="9" shape-rendering="crispEdges"><rect x="0" y="0" width="9" height="9" fill="#fff"/><rect x="1" y="1" width="7" height="3" fill="#ffffff"/><rect x="1" y="4" width="7" height="1" fill="#f7f5f0"/><rect x="1" y="5" width="7" height="1" fill="#efebe3"/><rect x="1" y="6" width="7" height="1" fill="#e4ddd0"/><rect x="1" y="7" width="7" height="1" fill="#d9cfbe"/><rect x="1" y="0" width="7" height="1" fill="#7898b5"/><rect x="1" y="8" width="7" height="1" fill="#7898b5"/><rect x="0" y="1" width="1" height="7" fill="#7898b5"/><rect x="8" y="1" width="1" height="7" fill="#7898b5"/><rect x="0" y="0" width="1" height="1" fill="#d0dbe6"/><rect x="8" y="0" width="1" height="1" fill="#d0dbe6"/><rect x="0" y="8" width="1" height="1" fill="#d0dbe6"/><rect x="8" y="8" width="1" height="1" fill="#d0dbe6"/><rect x="2" y="4" width="5" height="1" fill="#000"/><rect x="4" y="2" width="1" height="5" fill="#000"/></svg>
<svg class="a" style="left:61px;top:301px" width="13" height="13" shape-rendering="crispEdges"><rect x="0.5" y="0.5" width="12" height="12" fill="url(#cbg)" stroke="#245a9c"/></svg>
<svg class="a" style="left:77px;top:303px" width="14" height="13" shape-rendering="crispEdges"><rect x="0" y="0" width="14" height="13" fill="#d6d6d6"/><rect x="1" y="1" width="12" height="11" fill="#fff"/><rect x="1" y="1" width="1" height="11" fill="#f2f2f2"/><rect x="12" y="1" width="1" height="11" fill="#f2f2f2"/><rect x="1" y="2" width="12" height="1" fill="#dcdcdc"/><rect x="1" y="6" width="12" height="1" fill="#dcdcdc"/><rect x="1" y="7" width="12" height="1" fill="#e8e8e8"/><rect x="0" y="0" width="1" height="1" fill="#ececec"/><rect x="13" y="0" width="1" height="1" fill="#ececec"/><rect x="0" y="12" width="1" height="1" fill="#ececec"/><rect x="13" y="12" width="1" height="1" fill="#ececec"/></svg>
<div class="t tx" style="left:93px;top:300px;color:#000;letter-spacing:-0.133px">BudgetHistoryLog</div>
<svg class="a" style="left:44px;top:319px" width="9" height="9" shape-rendering="crispEdges"><rect x="0" y="0" width="9" height="9" fill="#fff"/><rect x="1" y="1" width="7" height="3" fill="#ffffff"/><rect x="1" y="4" width="7" height="1" fill="#f7f5f0"/><rect x="1" y="5" width="7" height="1" fill="#efebe3"/><rect x="1" y="6" width="7" height="1" fill="#e4ddd0"/><rect x="1" y="7" width="7" height="1" fill="#d9cfbe"/><rect x="1" y="0" width="7" height="1" fill="#7898b5"/><rect x="1" y="8" width="7" height="1" fill="#7898b5"/><rect x="0" y="1" width="1" height="7" fill="#7898b5"/><rect x="8" y="1" width="1" height="7" fill="#7898b5"/><rect x="0" y="0" width="1" height="1" fill="#d0dbe6"/><rect x="8" y="0" width="1" height="1" fill="#d0dbe6"/><rect x="0" y="8" width="1" height="1" fill="#d0dbe6"/><rect x="8" y="8" width="1" height="1" fill="#d0dbe6"/><rect x="2" y="4" width="5" height="1" fill="#000"/><rect x="4" y="2" width="1" height="5" fill="#000"/></svg>
<svg class="a" style="left:61px;top:317px" width="13" height="13" shape-rendering="crispEdges"><rect x="0.5" y="0.5" width="12" height="12" fill="url(#cbg)" stroke="#245a9c"/></svg>
<svg class="a" style="left:77px;top:319px" width="14" height="13" shape-rendering="crispEdges"><rect x="0" y="0" width="14" height="13" fill="#d6d6d6"/><rect x="1" y="1" width="12" height="11" fill="#fff"/><rect x="1" y="1" width="1" height="11" fill="#f2f2f2"/><rect x="12" y="1" width="1" height="11" fill="#f2f2f2"/><rect x="1" y="2" width="12" height="1" fill="#dcdcdc"/><rect x="1" y="6" width="12" height="1" fill="#dcdcdc"/><rect x="1" y="7" width="12" height="1" fill="#e8e8e8"/><rect x="0" y="0" width="1" height="1" fill="#ececec"/><rect x="13" y="0" width="1" height="1" fill="#ececec"/><rect x="0" y="12" width="1" height="1" fill="#ececec"/><rect x="13" y="12" width="1" height="1" fill="#ececec"/></svg>
<div class="t tx" style="left:93px;top:316px;color:#000;letter-spacing:-0.222px">BudgetNode</div>
<svg class="a" style="left:44px;top:335px" width="9" height="9" shape-rendering="crispEdges"><rect x="0" y="0" width="9" height="9" fill="#fff"/><rect x="1" y="1" width="7" height="3" fill="#ffffff"/><rect x="1" y="4" width="7" height="1" fill="#f7f5f0"/><rect x="1" y="5" width="7" height="1" fill="#efebe3"/><rect x="1" y="6" width="7" height="1" fill="#e4ddd0"/><rect x="1" y="7" width="7" height="1" fill="#d9cfbe"/><rect x="1" y="0" width="7" height="1" fill="#7898b5"/><rect x="1" y="8" width="7" height="1" fill="#7898b5"/><rect x="0" y="1" width="1" height="7" fill="#7898b5"/><rect x="8" y="1" width="1" height="7" fill="#7898b5"/><rect x="0" y="0" width="1" height="1" fill="#d0dbe6"/><rect x="8" y="0" width="1" height="1" fill="#d0dbe6"/><rect x="0" y="8" width="1" height="1" fill="#d0dbe6"/><rect x="8" y="8" width="1" height="1" fill="#d0dbe6"/><rect x="2" y="4" width="5" height="1" fill="#000"/><rect x="4" y="2" width="1" height="5" fill="#000"/></svg>
<svg class="a" style="left:61px;top:333px" width="13" height="13" shape-rendering="crispEdges"><rect x="0.5" y="0.5" width="12" height="12" fill="url(#cbg)" stroke="#245a9c"/><rect x="3" y="5" width="1" height="3" fill="#1f9c1f"/><rect x="4" y="6" width="1" height="3" fill="#1f9c1f"/><rect x="5" y="7" width="1" height="3" fill="#1f9c1f"/><rect x="6" y="6" width="1" height="3" fill="#1f9c1f"/><rect x="7" y="5" width="1" height="3" fill="#1f9c1f"/><rect x="8" y="4" width="1" height="3" fill="#1f9c1f"/><rect x="9" y="3" width="1" height="3" fill="#1f9c1f"/></svg>
<svg class="a" style="left:77px;top:335px" width="14" height="13" shape-rendering="crispEdges"><rect x="0" y="0" width="14" height="13" fill="#5c5c5c"/><rect x="1" y="1" width="12" height="11" fill="#fff"/><rect x="1" y="1" width="1" height="11" fill="#c8c8c8"/><rect x="12" y="1" width="1" height="11" fill="#c8c8c8"/><rect x="1" y="2" width="12" height="1" fill="#6a6a6a"/><rect x="1" y="6" width="12" height="1" fill="#6a6a6a"/><rect x="1" y="7" width="12" height="1" fill="#a4a4a4"/><rect x="0" y="0" width="1" height="1" fill="#b0b0b0"/><rect x="13" y="0" width="1" height="1" fill="#b0b0b0"/><rect x="0" y="12" width="1" height="1" fill="#b0b0b0"/><rect x="13" y="12" width="1" height="1" fill="#b0b0b0"/></svg>
<div class="t tx" style="left:93px;top:332px;color:#3a7fb7;letter-spacing:-0.154px">BudgetNodeNote</div>
<svg class="a" style="left:44px;top:351px" width="9" height="9" shape-rendering="crispEdges"><rect x="0" y="0" width="9" height="9" fill="#fff"/><rect x="1" y="1" width="7" height="3" fill="#ffffff"/><rect x="1" y="4" width="7" height="1" fill="#f7f5f0"/><rect x="1" y="5" width="7" height="1" fill="#efebe3"/><rect x="1" y="6" width="7" height="1" fill="#e4ddd0"/><rect x="1" y="7" width="7" height="1" fill="#d9cfbe"/><rect x="1" y="0" width="7" height="1" fill="#7898b5"/><rect x="1" y="8" width="7" height="1" fill="#7898b5"/><rect x="0" y="1" width="1" height="7" fill="#7898b5"/><rect x="8" y="1" width="1" height="7" fill="#7898b5"/><rect x="0" y="0" width="1" height="1" fill="#d0dbe6"/><rect x="8" y="0" width="1" height="1" fill="#d0dbe6"/><rect x="0" y="8" width="1" height="1" fill="#d0dbe6"/><rect x="8" y="8" width="1" height="1" fill="#d0dbe6"/><rect x="2" y="4" width="5" height="1" fill="#000"/></svg>
<svg class="a" style="left:61px;top:349px" width="13" height="13" shape-rendering="crispEdges"><rect x="0.5" y="0.5" width="12" height="12" fill="url(#cbg)" stroke="#245a9c"/><rect x="3" y="5" width="1" height="3" fill="#1f9c1f"/><rect x="4" y="6" width="1" height="3" fill="#1f9c1f"/><rect x="5" y="7" width="1" height="3" fill="#1f9c1f"/><rect x="6" y="6" width="1" height="3" fill="#1f9c1f"/><rect x="7" y="5" width="1" height="3" fill="#1f9c1f"/><rect x="8" y="4" width="1" height="3" fill="#1f9c1f"/><rect x="9" y="3" width="1" height="3" fill="#1f9c1f"/></svg>
<svg class="a" style="left:77px;top:351px" width="14" height="13" shape-rendering="crispEdges"><rect x="0" y="0" width="14" height="13" fill="#5c5c5c"/><rect x="1" y="1" width="12" height="11" fill="#fff"/><rect x="1" y="1" width="1" height="11" fill="#c8c8c8"/><rect x="12" y="1" width="1" height="11" fill="#c8c8c8"/><rect x="1" y="2" width="12" height="1" fill="#6a6a6a"/><rect x="1" y="6" width="12" height="1" fill="#6a6a6a"/><rect x="1" y="7" width="12" height="1" fill="#a4a4a4"/><rect x="0" y="0" width="1" height="1" fill="#b0b0b0"/><rect x="13" y="0" width="1" height="1" fill="#b0b0b0"/><rect x="0" y="12" width="1" height="1" fill="#b0b0b0"/><rect x="13" y="12" width="1" height="1" fill="#b0b0b0"/></svg>
<div class="t tx" style="left:93px;top:348px;color:#3a7fb7;letter-spacing:-0.083px">BudgetProcess</div>
<svg class="a" style="left:80px;top:365px" width="13" height="13" shape-rendering="crispEdges"><rect x="0.5" y="0.5" width="12" height="12" fill="url(#cbg)" stroke="#245a9c"/><rect x="3" y="5" width="1" height="3" fill="#1f9c1f"/><rect x="4" y="6" width="1" height="3" fill="#1f9c1f"/><rect x="5" y="7" width="1" height="3" fill="#1f9c1f"/><rect x="6" y="6" width="1" height="3" fill="#1f9c1f"/><rect x="7" y="5" width="1" height="3" fill="#1f9c1f"/><rect x="8" y="4" width="1" height="3" fill="#1f9c1f"/><rect x="9" y="3" width="1" height="3" fill="#1f9c1f"/></svg>
<svg class="a" style="left:98px;top:367px" width="13" height="13" shape-rendering="crispEdges"><rect x="0" y="0" width="9" height="8" fill="#fff"/><rect x="0" y="0" width="8" height="1" fill="#c4c0c0"/><rect x="0" y="0" width="1" height="7" fill="#c4c0c0"/><rect x="1" y="1" width="7" height="1" fill="#00f4f4"/><rect x="1" y="2" width="7" height="1" fill="#009c9c"/><rect x="8" y="0" width="1" height="8" fill="#000"/><rect x="0" y="7" width="9" height="1" fill="#000"/><rect x="4" y="5" width="9" height="8" fill="#fff"/><rect x="4" y="5" width="8" height="1" fill="#c4c0c0"/><rect x="4" y="5" width="1" height="7" fill="#c4c0c0"/><rect x="5" y="6" width="7" height="1" fill="#00f4f4"/><rect x="5" y="7" width="7" height="1" fill="#009c9c"/><rect x="12" y="5" width="1" height="8" fill="#000"/><rect x="4" y="12" width="9" height="1" fill="#000"/></svg>
<div class="t tx" style="left:112px;top:364px;color:#000;letter-spacing:-0.077px">BUDGET_PROCESS</div>
<svg class="a" style="left:80px;top:381px" width="13" height="13" shape-rendering="crispEdges"><rect x="0.5" y="0.5" width="12" height="12" fill="url(#cbg)" stroke="#245a9c"/></svg>
<svg class="a" style="left:98px;top:383px" width="13" height="13" shape-rendering="crispEdges"><rect x="0" y="0" width="9" height="8" fill="#fff"/><rect x="0" y="0" width="8" height="1" fill="#cbc9cd"/><rect x="0" y="0" width="1" height="7" fill="#cbc9cd"/><rect x="1" y="1" width="7" height="1" fill="#cbc9cd"/><rect x="1" y="2" width="7" height="1" fill="#c4c2c6"/><rect x="8" y="0" width="1" height="8" fill="#858285"/><rect x="0" y="7" width="9" height="1" fill="#858285"/><rect x="4" y="5" width="9" height="8" fill="#fff"/><rect x="4" y="5" width="8" height="1" fill="#cbc9cd"/><rect x="4" y="5" width="1" height="7" fill="#cbc9cd"/><rect x="5" y="6" width="7" height="1" fill="#cbc9cd"/><rect x="5" y="7" width="7" height="1" fill="#c4c2c6"/><rect x="12" y="5" width="1" height="8" fill="#858285"/><rect x="4" y="12" width="9" height="1" fill="#858285"/></svg>
<div class="a" style="left:111px;top:380px;width:153px;height:15px;background:#316ac5"></div>
<div class="t tx" style="left:112px;top:380px;color:#fff;letter-spacing:0.095px">BUDGET_PROCESS_PERIODS</div>
<svg class="a" style="left:80px;top:397px" width="13" height="13" shape-rendering="crispEdges"><rect x="0.5" y="0.5" width="12" height="12" fill="url(#cbg)" stroke="#245a9c"/></svg>
<svg class="a" style="left:98px;top:399px" width="13" height="13" shape-rendering="crispEdges"><rect x="0" y="0" width="9" height="8" fill="#fff"/><rect x="0" y="0" width="8" height="1" fill="#cbc9cd"/><rect x="0" y="0" width="1" height="7" fill="#cbc9cd"/><rect x="1" y="1" width="7" height="1" fill="#cbc9cd"/><rect x="1" y="2" width="7" height="1" fill="#c4c2c6"/><rect x="8" y="0" width="1" height="8" fill="#858285"/><rect x="0" y="7" width="9" height="1" fill="#858285"/><rect x="4" y="5" width="9" height="8" fill="#fff"/><rect x="4" y="5" width="8" height="1" fill="#cbc9cd"/><rect x="4" y="5" width="1" height="7" fill="#cbc9cd"/><rect x="5" y="6" width="7" height="1" fill="#cbc9cd"/><rect x="5" y="7" width="7" height="1" fill="#c4c2c6"/><rect x="12" y="5" width="1" height="8" fill="#858285"/><rect x="4" y="12" width="9" height="1" fill="#858285"/></svg>
<div class="t tx" style="left:112px;top:396px;color:#808080">BUDGET_PROCESS_PUB</div>
<svg class="a" style="left:63px;top:415px" width="9" height="9" shape-rendering="crispEdges"><rect x="0" y="0" width="9" height="9" fill="#fff"/><rect x="1" y="1" width="7" height="3" fill="#ffffff"/><rect x="1" y="4" width="7" height="1" fill="#f7f5f0"/><rect x="1" y="5" width="7" height="1" fill="#efebe3"/><rect x="1" y="6" width="7" height="1" fill="#e4ddd0"/><rect x="1" y="7" width="7" height="1" fill="#d9cfbe"/><rect x="1" y="0" width="7" height="1" fill="#7898b5"/><rect x="1" y="8" width="7" height="1" fill="#7898b5"/><rect x="0" y="1" width="1" height="7" fill="#7898b5"/><rect x="8" y="1" width="1" height="7" fill="#7898b5"/><rect x="0" y="0" width="1" height="1" fill="#d0dbe6"/><rect x="8" y="0" width="1" height="1" fill="#d0dbe6"/><rect x="0" y="8" width="1" height="1" fill="#d0dbe6"/><rect x="8" y="8" width="1" height="1" fill="#d0dbe6"/><rect x="2" y="4" width="5" height="1" fill="#000"/></svg>
<svg class="a" style="left:80px;top:413px" width="13" height="13" shape-rendering="crispEdges"><rect x="0.5" y="0.5" width="12" height="12" fill="url(#cbg)" stroke="#245a9c"/><rect x="3" y="5" width="1" height="3" fill="#1f9c1f"/><rect x="4" y="6" width="1" height="3" fill="#1f9c1f"/><rect x="5" y="7" width="1" height="3" fill="#1f9c1f"/><rect x="6" y="6" width="1" height="3" fill="#1f9c1f"/><rect x="7" y="5" width="1" height="3" fill="#1f9c1f"/><rect x="8" y="4" width="1" height="3" fill="#1f9c1f"/><rect x="9" y="3" width="1" height="3" fill="#1f9c1f"/></svg>
<svg class="a" style="left:96px;top:414px" width="15" height="14" viewBox="0 0 15 14">
<path d="M4.5 3.5 L12 3.5 L9.8 6.6 L2.2 6.6 Z" fill="#5e5e0c"/>
<path d="M7 0.5 L14.5 0.5 L12 3.5 L4.5 3.5 Z" fill="#fff" stroke="#555" stroke-width="0.8"/>
<path d="M9.8 6.8 L14.4 2.4 L14.4 8.6 L9.8 13.6 Z" fill="#90901a" stroke="#3c3c08" stroke-width="0.6"/>
<path d="M10.6 7.6 L13.6 4.6 L13.6 6 L10.6 9 Z" fill="#b4b428"/>
<path d="M2.2 6.5 H9.8 V13.6 H2.2 Z" fill="#e6e62a" stroke="#4a4a0a" stroke-width="0.6"/>
<path d="M3 7.5h1v1h-1zM5 7.5h1v1h-1zM7 7.5h1v1h-1zM4 8.5h1v1h-1zM6 8.5h1v1h-1zM8 8.5h1v1h-1zM3 9.5h1v1h-1zM5 9.5h1v1h-1zM7 9.5h1v1h-1zM4 10.5h1v1h-1zM6 10.5h1v1h-1zM8 10.5h1v1h-1zM3 11.5h1v1h-1zM5 11.5h1v1h-1zM7 11.5h1v1h-1z" fill="#ffffa8"/>
<path d="M4.6 3.4 Q3.4 0.6 1.6 1.8 Q-0.2 3.4 1.2 5.6 L2.3 6.6 L5 4.4 Z" fill="#fff" stroke="#555" stroke-width="0.8"/>
</svg>
<div class="t tx" style="left:112px;top:412px;color:#3a7fb7;letter-spacing:0.118px">BUDGET_PROCESS_API</div>
<svg class="a" style="left:99px;top:429px" width="13" height="13" shape-rendering="crispEdges"><rect x="0.5" y="0.5" width="12" height="12" fill="url(#cbg)" stroke="#245a9c"/><rect x="3" y="5" width="1" height="3" fill="#1f9c1f"/><rect x="4" y="6" width="1" height="3" fill="#1f9c1f"/><rect x="5" y="7" width="1" height="3" fill="#1f9c1f"/><rect x="6" y="6" width="1" height="3" fill="#1f9c1f"/><rect x="7" y="5" width="1" height="3" fill="#1f9c1f"/><rect x="8" y="4" width="1" height="3" fill="#1f9c1f"/><rect x="9" y="3" width="1" height="3" fill="#1f9c1f"/></svg>
<div class="a fx" style="left:118px;top:431px;color:#000;text-shadow:1px 1px 0 rgba(0,228,228,.75)"><i class="ff">f</i><span class="fp">(x)</span></div>
<div class="t tx" style="left:132px;top:428px;color:#000">Copy_Budget_Process</div>
<svg class="a" style="left:99px;top:445px" width="13" height="13" shape-rendering="crispEdges"><rect x="0.5" y="0.5" width="12" height="12" fill="url(#cbg)" stroke="#245a9c"/><rect x="3" y="5" width="1" height="3" fill="#1f9c1f"/><rect x="4" y="6" width="1" height="3" fill="#1f9c1f"/><rect x="5" y="7" width="1" height="3" fill="#1f9c1f"/><rect x="6" y="6" width="1" height="3" fill="#1f9c1f"/><rect x="7" y="5" width="1" height="3" fill="#1f9c1f"/><rect x="8" y="4" width="1" height="3" fill="#1f9c1f"/><rect x="9" y="3" width="1" height="3" fill="#1f9c1f"/></svg>
<div class="a fx" style="left:118px;top:447px;color:#000;text-shadow:1px 1px 0 rgba(0,228,228,.75)"><i class="ff">f</i><span class="fp">(x)</span></div>
<div class="t tx" style="left:132px;top:444px;color:#000;letter-spacing:-0.25px">Exist</div>
<svg class="a" style="left:99px;top:461px" width="13" height="13" shape-rendering="crispEdges"><rect x="0.5" y="0.5" width="12" height="12" fill="url(#cbg)" stroke="#245a9c"/></svg>
<div class="a fx fx0" style="left:118px;top:463px;color:#a6a6a6"><i class="ff">f</i><span class="fp">(x)</span></div>
<div class="t tx" style="left:132px;top:460px;color:#9c9c9c;letter-spacing:0.25px">Extract_Year_Period__</div>
<svg class="a" style="left:99px;top:477px" width="13" height="13" shape-rendering="crispEdges"><rect x="0.5" y="0.5" width="12" height="12" fill="url(#cbg)" stroke="#245a9c"/><rect x="3" y="5" width="1" height="3" fill="#1f9c1f"/><rect x="4" y="6" width="1" height="3" fill="#1f9c1f"/><rect x="5" y="7" width="1" height="3" fill="#1f9c1f"/><rect x="6" y="6" width="1" height="3" fill="#1f9c1f"/><rect x="7" y="5" width="1" height="3" fill="#1f9c1f"/><rect x="8" y="4" width="1" height="3" fill="#1f9c1f"/><rect x="9" y="3" width="1" height="3" fill="#1f9c1f"/></svg>
<div class="a fx" style="left:118px;top:479px;color:#000;text-shadow:1px 1px 0 rgba(0,228,228,.75)"><i class="ff">f</i><span class="fp">(x)</span></div>
<div class="t tx" style="left:132px;top:476px;color:#000">Get</div>
<svg class="a" style="left:99px;top:493px" width="13" height="13" shape-rendering="crispEdges"><rect x="0.5" y="0.5" width="12" height="12" fill="url(#cbg)" stroke="#245a9c"/><rect x="3" y="5" width="1" height="3" fill="#1f9c1f"/><rect x="4" y="6" width="1" height="3" fill="#1f9c1f"/><rect x="5" y="7" width="1" height="3" fill="#1f9c1f"/><rect x="6" y="6" width="1" height="3" fill="#1f9c1f"/><rect x="7" y="5" width="1" height="3" fill="#1f9c1f"/><rect x="8" y="4" width="1" height="3" fill="#1f9c1f"/><rect x="9" y="3" width="1" height="3" fill="#1f9c1f"/></svg>
<div class="a fx" style="left:118px;top:495px;color:#000;text-shadow:1px 1px 0 rgba(0,228,228,.75)"><i class="ff">f</i><span class="fp">(x)</span></div>
<div class="t tx" style="left:132px;top:492px;color:#000;letter-spacing:-0.069px">Get_Budget_Process_Description</div>
<svg class="a" style="left:99px;top:509px" width="13" height="13" shape-rendering="crispEdges"><rect x="0.5" y="0.5" width="12" height="12" fill="url(#cbg)" stroke="#245a9c"/><rect x="3" y="5" width="1" height="3" fill="#1f9c1f"/><rect x="4" y="6" width="1" height="3" fill="#1f9c1f"/><rect x="5" y="7" width="1" height="3" fill="#1f9c1f"/><rect x="6" y="6" width="1" height="3" fill="#1f9c1f"/><rect x="7" y="5" width="1" height="3" fill="#1f9c1f"/><rect x="8" y="4" width="1" height="3" fill="#1f9c1f"/><rect x="9" y="3" width="1" height="3" fill="#1f9c1f"/></svg>
<div class="a fx" style="left:118px;top:511px;color:#000;text-shadow:1px 1px 0 rgba(0,228,228,.75)"><i class="ff">f</i><span class="fp">(x)</span></div>
<div class="t tx" style="left:132px;top:508px;color:#000">Get_Budget_Process_Format</div>
<svg class="a" style="left:99px;top:525px" width="13" height="13" shape-rendering="crispEdges"><rect x="0.5" y="0.5" width="12" height="12" fill="url(#cbg)" stroke="#245a9c"/><rect x="3" y="5" width="1" height="3" fill="#1f9c1f"/><rect x="4" y="6" width="1" height="3" fill="#1f9c1f"/><rect x="5" y="7" width="1" height="3" fill="#1f9c1f"/><rect x="6" y="6" width="1" height="3" fill="#1f9c1f"/><rect x="7" y="5" width="1" height="3" fill="#1f9c1f"/><rect x="8" y="4" width="1" height="3" fill="#1f9c1f"/><rect x="9" y="3" width="1" height="3" fill="#1f9c1f"/></svg>
<div class="a fx" style="left:118px;top:527px;color:#000;text-shadow:1px 1px 0 rgba(0,228,228,.75)"><i class="ff">f</i><span class="fp">(x)</span></div>
<div class="t tx" style="left:132px;top:524px;color:#000">Get_Budget_Process_Status</div>
<svg class="a" style="left:99px;top:541px" width="13" height="13" shape-rendering="crispEdges"><rect x="0.5" y="0.5" width="12" height="12" fill="url(#cbg)" stroke="#245a9c"/><rect x="3" y="5" width="1" height="3" fill="#1f9c1f"/><rect x="4" y="6" width="1" height="3" fill="#1f9c1f"/><rect x="5" y="7" width="1" height="3" fill="#1f9c1f"/><rect x="6" y="6" width="1" height="3" fill="#1f9c1f"/><rect x="7" y="5" width="1" height="3" fill="#1f9c1f"/><rect x="8" y="4" width="1" height="3" fill="#1f9c1f"/><rect x="9" y="3" width="1" height="3" fill="#1f9c1f"/></svg>
<div class="a fx" style="left:118px;top:543px;color:#000;text-shadow:1px 1px 0 rgba(0,228,228,.75)"><i class="ff">f</i><span class="fp">(x)</span></div>
<div class="t tx" style="left:132px;top:540px;color:#000">Get_Code_Part_Description</div>
<svg class="a" style="left:99px;top:557px" width="13" height="13" shape-rendering="crispEdges"><rect x="0.5" y="0.5" width="12" height="12" fill="url(#cbg)" stroke="#245a9c"/><rect x="3" y="5" width="1" height="3" fill="#1f9c1f"/><rect x="4" y="6" width="1" height="3" fill="#1f9c1f"/><rect x="5" y="7" width="1" height="3" fill="#1f9c1f"/><rect x="6" y="6" width="1" height="3" fill="#1f9c1f"/><rect x="7" y="5" width="1" height="3" fill="#1f9c1f"/><rect x="8" y="4" width="1" height="3" fill="#1f9c1f"/><rect x="9" y="3" width="1" height="3" fill="#1f9c1f"/></svg>
<div class="a fx" style="left:118px;top:559px;color:#000;text-shadow:1px 1px 0 rgba(0,228,228,.75)"><i class="ff">f</i><span class="fp">(x)</span></div>
<div class="t tx" style="left:132px;top:556px;color:#000;letter-spacing:0.188px">Get_Currency_Type</div>
<svg class="a" style="left:99px;top:573px" width="13" height="13" shape-rendering="crispEdges"><rect x="0.5" y="0.5" width="12" height="12" fill="url(#cbg)" stroke="#245a9c"/><rect x="3" y="5" width="1" height="3" fill="#1f9c1f"/><rect x="4" y="6" width="1" height="3" fill="#1f9c1f"/><rect x="5" y="7" width="1" height="3" fill="#1f9c1f"/><rect x="6" y="6" width="1" height="3" fill="#1f9c1f"/><rect x="7" y="5" width="1" height="3" fill="#1f9c1f"/><rect x="8" y="4" width="1" height="3" fill="#1f9c1f"/><rect x="9" y="3" width="1" height="3" fill="#1f9c1f"/></svg>
<div class="a fx" style="left:118px;top:575px;color:#000;text-shadow:1px 1px 0 rgba(0,228,228,.75)"><i class="ff">f</i><span class="fp">(x)</span></div>
<div class="t tx" style="left:132px;top:572px;color:#000;letter-spacing:-0.143px">Get_Description</div>
<svg class="a" style="left:99px;top:589px" width="13" height="13" shape-rendering="crispEdges"><rect x="0.5" y="0.5" width="12" height="12" fill="url(#cbg)" stroke="#245a9c"/><rect x="3" y="5" width="1" height="3" fill="#1f9c1f"/><rect x="4" y="6" width="1" height="3" fill="#1f9c1f"/><rect x="5" y="7" width="1" height="3" fill="#1f9c1f"/><rect x="6" y="6" width="1" height="3" fill="#1f9c1f"/><rect x="7" y="5" width="1" height="3" fill="#1f9c1f"/><rect x="8" y="4" width="1" height="3" fill="#1f9c1f"/><rect x="9" y="3" width="1" height="3" fill="#1f9c1f"/></svg>
<div class="a fx" style="left:118px;top:591px;color:#000;text-shadow:1px 1px 0 rgba(0,228,228,.75)"><i class="ff">f</i><span class="fp">(x)</span></div>
<div class="t tx" style="left:132px;top:588px;color:#000;letter-spacing:-0.214px">Get_Environment</div>
<svg class="a" style="left:99px;top:605px" width="13" height="13" shape-rendering="crispEdges"><rect x="0.5" y="0.5" width="12" height="12" fill="url(#cbg)" stroke="#245a9c"/><rect x="3" y="5" width="1" height="3" fill="#1f9c1f"/><rect x="4" y="6" width="1" height="3" fill="#1f9c1f"/><rect x="5" y="7" width="1" height="3" fill="#1f9c1f"/><rect x="6" y="6" width="1" height="3" fill="#1f9c1f"/><rect x="7" y="5" width="1" height="3" fill="#1f9c1f"/><rect x="8" y="4" width="1" height="3" fill="#1f9c1f"/><rect x="9" y="3" width="1" height="3" fill="#1f9c1f"/></svg>
<div class="a fx" style="left:118px;top:607px;color:#000;text-shadow:1px 1px 0 rgba(0,228,228,.75)"><i class="ff">f</i><span class="fp">(x)</span></div>
<div class="t tx" style="left:132px;top:604px;color:#000">Get_Format_Value</div>
<svg class="a" style="left:99px;top:621px" width="13" height="13" shape-rendering="crispEdges"><rect x="0.5" y="0.5" width="12" height="12" fill="url(#cbg)" stroke="#245a9c"/><rect x="3" y="5" width="1" height="3" fill="#1f9c1f"/><rect x="4" y="6" width="1" height="3" fill="#1f9c1f"/><rect x="5" y="7" width="1" height="3" fill="#1f9c1f"/><rect x="6" y="6" width="1" height="3" fill="#1f9c1f"/><rect x="7" y="5" width="1" height="3" fill="#1f9c1f"/><rect x="8" y="4" width="1" height="3" fill="#1f9c1f"/><rect x="9" y="3" width="1" height="3" fill="#1f9c1f"/></svg>
<div class="a fx" style="left:118px;top:623px;color:#000;text-shadow:1px 1px 0 rgba(0,228,228,.75)"><i class="ff">f</i><span class="fp">(x)</span></div>
<div class="t tx" style="left:132px;top:620px;color:#000;letter-spacing:0.158px">Get_From_Year_Period</div>
<svg class="a" style="left:99px;top:637px" width="13" height="13" shape-rendering="crispEdges"><rect x="0.5" y="0.5" width="12" height="12" fill="url(#cbg)" stroke="#245a9c"/><rect x="3" y="5" width="1" height="3" fill="#1f9c1f"/><rect x="4" y="6" width="1" height="3" fill="#1f9c1f"/><rect x="5" y="7" width="1" height="3" fill="#1f9c1f"/><rect x="6" y="6" width="1" height="3" fill="#1f9c1f"/><rect x="7" y="5" width="1" height="3" fill="#1f9c1f"/><rect x="8" y="4" width="1" height="3" fill="#1f9c1f"/><rect x="9" y="3" width="1" height="3" fill="#1f9c1f"/></svg>
<div class="a fx" style="left:118px;top:639px;color:#000;text-shadow:1px 1px 0 rgba(0,228,228,.75)"><i class="ff">f</i><span class="fp">(x)</span></div>
<div class="t tx" style="left:132px;top:636px;color:#000;letter-spacing:0.083px">Get_Protected</div>
<svg class="a" style="left:99px;top:653px" width="13" height="13" shape-rendering="crispEdges"><rect x="0.5" y="0.5" width="12" height="12" fill="url(#cbg)" stroke="#245a9c"/><rect x="3" y="5" width="1" height="3" fill="#1f9c1f"/><rect x="4" y="6" width="1" height="3" fill="#1f9c1f"/><rect x="5" y="7" width="1" height="3" fill="#1f9c1f"/><rect x="6" y="6" width="1" height="3" fill="#1f9c1f"/><rect x="7" y="5" width="1" height="3" fill="#1f9c1f"/><rect x="8" y="4" width="1" height="3" fill="#1f9c1f"/><rect x="9" y="3" width="1" height="3" fill="#1f9c1f"/></svg>
<div class="a fx" style="left:118px;top:655px;color:#000;text-shadow:1px 1px 0 rgba(0,228,228,.75)"><i class="ff">f</i><span class="fp">(x)</span></div>
<div class="t tx" style="left:132px;top:652px;color:#000">Get_Status</div>
<svg class="a" style="left:99px;top:669px" width="13" height="13" shape-rendering="crispEdges"><rect x="0.5" y="0.5" width="12" height="12" fill="url(#cbg)" stroke="#245a9c"/></svg>
<div class="a fx fx0" style="left:118px;top:671px;color:#a6a6a6"><i class="ff">f</i><span class="fp">(x)</span></div>
<div class="t tx" style="left:132px;top:668px;color:#9c9c9c;letter-spacing:0.263px">Get_True_Year_Period</div>
<svg class="a" style="left:99px;top:685px" width="13" height="13" shape-rendering="crispEdges"><rect x="0.5" y="0.5" width="12" height="12" fill="url(#cbg)" stroke="#245a9c"/><rect x="3" y="5" width="1" height="3" fill="#1f9c1f"/><rect x="4" y="6" width="1" height="3" fill="#1f9c1f"/><rect x="5" y="7" width="1" height="3" fill="#1f9c1f"/><rect x="6" y="6" width="1" height="3" fill="#1f9c1f"/><rect x="7" y="5" width="1" height="3" fill="#1f9c1f"/><rect x="8" y="4" width="1" height="3" fill="#1f9c1f"/><rect x="9" y="3" width="1" height="3" fill="#1f9c1f"/></svg>
<div class="a fx" style="left:118px;top:687px;color:#000;text-shadow:1px 1px 0 rgba(0,228,228,.75)"><i class="ff">f</i><span class="fp">(x)</span></div>
<div class="t tx" style="left:132px;top:684px;color:#000;letter-spacing:0.1px">Get_Until_Year_Period</div>
<svg class="a" style="left:99px;top:701px" width="13" height="13" shape-rendering="crispEdges"><rect x="0.5" y="0.5" width="12" height="12" fill="url(#cbg)" stroke="#245a9c"/><rect x="3" y="5" width="1" height="3" fill="#1f9c1f"/><rect x="4" y="6" width="1" height="3" fill="#1f9c1f"/><rect x="5" y="7" width="1" height="3" fill="#1f9c1f"/><rect x="6" y="6" width="1" height="3" fill="#1f9c1f"/><rect x="7" y="5" width="1" height="3" fill="#1f9c1f"/><rect x="8" y="4" width="1" height="3" fill="#1f9c1f"/><rect x="9" y="3" width="1" height="3" fill="#1f9c1f"/></svg>
<div class="a fx" style="left:118px;top:703px;color:#000;text-shadow:1px 1px 0 rgba(0,228,228,.75)"><i class="ff">f</i><span class="fp">(x)</span></div>
<div class="t tx" style="left:132px;top:700px;color:#000;letter-spacing:0.15px">Has_Year_Transactions</div>
<svg class="a" style="left:99px;top:717px" width="13" height="13" shape-rendering="crispEdges"><rect x="0.5" y="0.5" width="12" height="12" fill="url(#cbg)" stroke="#245a9c"/><rect x="3" y="5" width="1" height="3" fill="#1f9c1f"/><rect x="4" y="6" width="1" height="3" fill="#1f9c1f"/><rect x="5" y="7" width="1" height="3" fill="#1f9c1f"/><rect x="6" y="6" width="1" height="3" fill="#1f9c1f"/><rect x="7" y="5" width="1" height="3" fill="#1f9c1f"/><rect x="8" y="4" width="1" height="3" fill="#1f9c1f"/><rect x="9" y="3" width="1" height="3" fill="#1f9c1f"/></svg>
<div class="a fx" style="left:118px;top:719px;color:#000;text-shadow:1px 1px 0 rgba(0,228,228,.75)"><i class="ff">f</i><span class="fp">(x)</span></div>
<div class="t tx" style="left:132px;top:716px;color:#000">Init</div>
<svg class="a" style="left:99px;top:733px" width="13" height="13" shape-rendering="crispEdges"><rect x="0.5" y="0.5" width="12" height="12" fill="url(#cbg)" stroke="#245a9c"/><rect x="3" y="5" width="1" height="3" fill="#1f9c1f"/><rect x="4" y="6" width="1" height="3" fill="#1f9c1f"/><rect x="5" y="7" width="1" height="3" fill="#1f9c1f"/><rect x="6" y="6" width="1" height="3" fill="#1f9c1f"/><rect x="7" y="5" width="1" height="3" fill="#1f9c1f"/><rect x="8" y="4" width="1" height="3" fill="#1f9c1f"/><rect x="9" y="3" width="1" height="3" fill="#1f9c1f"/></svg>
<div class="a fx" style="left:118px;top:735px;color:#000;text-shadow:1px 1px 0 rgba(0,228,228,.75)"><i class="ff">f</i><span class="fp">(x)</span></div>
<div class="t tx" style="left:132px;top:732px;color:#000;letter-spacing:0.2px">Lock__</div>
<svg class="a" style="left:99px;top:749px" width="13" height="13" shape-rendering="crispEdges"><rect x="0.5" y="0.5" width="12" height="12" fill="url(#cbg)" stroke="#245a9c"/><rect x="3" y="5" width="1" height="3" fill="#1f9c1f"/><rect x="4" y="6" width="1" height="3" fill="#1f9c1f"/><rect x="5" y="7" width="1" height="3" fill="#1f9c1f"/><rect x="6" y="6" width="1" height="3" fill="#1f9c1f"/><rect x="7" y="5" width="1" height="3" fill="#1f9c1f"/><rect x="8" y="4" width="1" height="3" fill="#1f9c1f"/><rect x="9" y="3" width="1" height="3" fill="#1f9c1f"/></svg>
<div class="a fx" style="left:118px;top:751px;color:#000;text-shadow:1px 1px 0 rgba(0,228,228,.75)"><i class="ff">f</i><span class="fp">(x)</span></div>
<div class="t tx" style="left:132px;top:748px;color:#000;letter-spacing:0.143px">Modify__</div>
<svg class="a" style="left:99px;top:765px" width="13" height="13" shape-rendering="crispEdges"><rect x="0.5" y="0.5" width="12" height="12" fill="url(#cbg)" stroke="#245a9c"/><rect x="3" y="5" width="1" height="3" fill="#1f9c1f"/><rect x="4" y="6" width="1" height="3" fill="#1f9c1f"/><rect x="5" y="7" width="1" height="3" fill="#1f9c1f"/><rect x="6" y="6" width="1" height="3" fill="#1f9c1f"/><rect x="7" y="5" width="1" height="3" fill="#1f9c1f"/><rect x="8" y="4" width="1" height="3" fill="#1f9c1f"/><rect x="9" y="3" width="1" height="3" fill="#1f9c1f"/></svg>
<div class="a fx" style="left:118px;top:767px;color:#000;text-shadow:1px 1px 0 rgba(0,228,228,.75)"><i class="ff">f</i><span class="fp">(x)</span></div>
<div class="t tx" style="left:132px;top:764px;color:#000;letter-spacing:0.5px">New__</div>
<svg class="a" style="left:99px;top:781px" width="13" height="13" shape-rendering="crispEdges"><rect x="0.5" y="0.5" width="12" height="12" fill="url(#cbg)" stroke="#245a9c"/><rect x="3" y="5" width="1" height="3" fill="#1f9c1f"/><rect x="4" y="6" width="1" height="3" fill="#1f9c1f"/><rect x="5" y="7" width="1" height="3" fill="#1f9c1f"/><rect x="6" y="6" width="1" height="3" fill="#1f9c1f"/><rect x="7" y="5" width="1" height="3" fill="#1f9c1f"/><rect x="8" y="4" width="1" height="3" fill="#1f9c1f"/><rect x="9" y="3" width="1" height="3" fill="#1f9c1f"/></svg>
<div class="a fx" style="left:118px;top:783px;color:#000;text-shadow:1px 1px 0 rgba(0,228,228,.75)"><i class="ff">f</i><span class="fp">(x)</span></div>
<div class="t tx" style="left:132px;top:780px;color:#000;letter-spacing:0.286px">Remove__</div>
<svg class="a" style="left:99px;top:797px" width="13" height="13" shape-rendering="crispEdges"><rect x="0.5" y="0.5" width="12" height="12" fill="url(#cbg)" stroke="#245a9c"/><rect x="3" y="5" width="1" height="3" fill="#1f9c1f"/><rect x="4" y="6" width="1" height="3" fill="#1f9c1f"/><rect x="5" y="7" width="1" height="3" fill="#1f9c1f"/><rect x="6" y="6" width="1" height="3" fill="#1f9c1f"/><rect x="7" y="5" width="1" height="3" fill="#1f9c1f"/><rect x="8" y="4" width="1" height="3" fill="#1f9c1f"/><rect x="9" y="3" width="1" height="3" fill="#1f9c1f"/></svg>
<div class="a fx" style="left:118px;top:799px;color:#000;text-shadow:1px 1px 0 rgba(0,228,228,.75)"><i class="ff">f</i><span class="fp">(x)</span></div>
<div class="t tx" style="left:132px;top:796px;color:#000;letter-spacing:-0.077px">Scorecards_Connection_Exist</div>
<svg class="a" style="left:99px;top:813px" width="13" height="13" shape-rendering="crispEdges"><rect x="0.5" y="0.5" width="12" height="12" fill="url(#cbg)" stroke="#245a9c"/></svg>
<div class="a fx fx0" style="left:118px;top:815px;color:#a6a6a6"><i class="ff">f</i><span class="fp">(x)</span></div>
<div class="t tx" style="left:132px;top:812px;color:#9c9c9c">Update_Scorecard_By_Process</div>
<svg class="a" style="left:99px;top:829px" width="13" height="13" shape-rendering="crispEdges"><rect x="0.5" y="0.5" width="12" height="12" fill="url(#cbg)" stroke="#245a9c"/><rect x="3" y="5" width="1" height="3" fill="#1f9c1f"/><rect x="4" y="6" width="1" height="3" fill="#1f9c1f"/><rect x="5" y="7" width="1" height="3" fill="#1f9c1f"/><rect x="6" y="6" width="1" height="3" fill="#1f9c1f"/><rect x="7" y="5" width="1" height="3" fill="#1f9c1f"/><rect x="8" y="4" width="1" height="3" fill="#1f9c1f"/><rect x="9" y="3" width="1" height="3" fill="#1f9c1f"/></svg>
<div class="a fx" style="left:118px;top:831px;color:#000;text-shadow:1px 1px 0 rgba(0,228,228,.75)"><i class="ff">f</i><span class="fp">(x)</span></div>
<div class="t tx" style="left:132px;top:828px;color:#000;letter-spacing:-0.095px">Validate_Period_Format</div>
<svg class="a" style="left:44px;top:847px" width="9" height="9" shape-rendering="crispEdges"><rect x="0" y="0" width="9" height="9" fill="#fff"/><rect x="1" y="1" width="7" height="3" fill="#ffffff"/><rect x="1" y="4" width="7" height="1" fill="#f7f5f0"/><rect x="1" y="5" width="7" height="1" fill="#efebe3"/><rect x="1" y="6" width="7" height="1" fill="#e4ddd0"/><rect x="1" y="7" width="7" height="1" fill="#d9cfbe"/><rect x="1" y="0" width="7" height="1" fill="#7898b5"/><rect x="1" y="8" width="7" height="1" fill="#7898b5"/><rect x="0" y="1" width="1" height="7" fill="#7898b5"/><rect x="8" y="1" width="1" height="7" fill="#7898b5"/><rect x="0" y="0" width="1" height="1" fill="#d0dbe6"/><rect x="8" y="0" width="1" height="1" fill="#d0dbe6"/><rect x="0" y="8" width="1" height="1" fill="#d0dbe6"/><rect x="8" y="8" width="1" height="1" fill="#d0dbe6"/><rect x="2" y="4" width="5" height="1" fill="#000"/><rect x="4" y="2" width="1" height="5" fill="#000"/></svg>
<svg class="a" style="left:61px;top:845px" width="13" height="13" shape-rendering="crispEdges"><rect x="0.5" y="0.5" width="12" height="12" fill="url(#cbg)" stroke="#245a9c"/></svg>
<svg class="a" style="left:77px;top:847px" width="14" height="13" shape-rendering="crispEdges"><rect x="0" y="0" width="14" height="13" fill="#d6d6d6"/><rect x="1" y="1" width="12" height="11" fill="#fff"/><rect x="1" y="1" width="1" height="11" fill="#f2f2f2"/><rect x="12" y="1" width="1" height="11" fill="#f2f2f2"/><rect x="1" y="2" width="12" height="1" fill="#dcdcdc"/><rect x="1" y="6" width="12" height="1" fill="#dcdcdc"/><rect x="1" y="7" width="12" height="1" fill="#e8e8e8"/><rect x="0" y="0" width="1" height="1" fill="#ececec"/><rect x="13" y="0" width="1" height="1" fill="#ececec"/><rect x="0" y="12" width="1" height="1" fill="#ececec"/><rect x="13" y="12" width="1" height="1" fill="#ececec"/></svg>
<div class="a" style="left:91px;top:845px;width:1px;height:2px;background:#d6d6fa"></div>
<div class="a" style="left:467px;top:172px;width:16px;height:675px;background:linear-gradient(90deg,#f1efe9,#f7f6f2 40%,#fdfdfb 70%,#fefefc)"></div>
<div class="a" style="left:468px;top:172px;width:15px;height:17px;background:#fff;border-radius:3px"></div>
<div class="a" style="left:469px;top:173px;width:12px;height:14px;border-radius:2px;background:linear-gradient(135deg,#cfdcff,#c3d3fd 45%,#b7c9f8);box-shadow:1px 1px 0 #a3b9ea"></div>
<svg class="a" style="left:470px;top:177px" width="9" height="6" shape-rendering="crispEdges"><path d="M4 0h1v1h-1zM3 1h3v1h-3zM2 2h5v1h-5zM1 3h3v1h-3zM5 3h3v1h-3zM0 4h3v1h-3zM6 4h3v1h-3zM1 5h1v1h-1zM7 5h1v1h-1z" fill="#4d6185"/></svg>
<div class="a" style="left:468px;top:835px;width:15px;height:17px;background:#fff;border-radius:3px"></div>
<div class="a" style="left:469px;top:836px;width:12px;height:14px;border-radius:2px;background:linear-gradient(135deg,#cfdcff,#c3d3fd 45%,#b7c9f8);box-shadow:1px 1px 0 #a3b9ea"></div>
<svg class="a" style="left:470px;top:840px" width="9" height="6" shape-rendering="crispEdges"><path d="M1 0h1v1h-1zM7 0h1v1h-1zM0 1h3v1h-3zM6 1h3v1h-3zM1 2h3v1h-3zM5 2h3v1h-3zM2 3h5v1h-5zM3 4h3v1h-3zM4 5h1v1h-1z" fill="#4d6185"/></svg>
<div class="a" style="left:468px;top:202px;width:15px;height:133px;background:#fff;border-radius:3px"></div>
<div class="a" style="left:469px;top:203px;width:12px;height:130px;border-radius:2px;background:linear-gradient(90deg,#c9d8ff,#c3d3fd 50%,#b9cbf9);box-shadow:1px 1px 0 #a3b9ea"></div>
<div class="a" style="left:472px;top:265px;width:7px;height:1px;background:#eef4fe"></div>
<div class="a" style="left:473px;top:266px;width:7px;height:1px;background:#8cb0f8"></div>
<div class="a" style="left:472px;top:267px;width:7px;height:1px;background:#eef4fe"></div>
<div class="a" style="left:473px;top:268px;width:7px;height:1px;background:#8cb0f8"></div>
<div class="a" style="left:472px;top:269px;width:7px;height:1px;background:#eef4fe"></div>
<div class="a" style="left:473px;top:270px;width:7px;height:1px;background:#8cb0f8"></div>
<div class="a" style="left:472px;top:271px;width:7px;height:1px;background:#eef4fe"></div>
<div class="a" style="left:473px;top:272px;width:7px;height:1px;background:#8cb0f8"></div>
<div class="t b" id="wu" style="left:489px;top:171px;letter-spacing:0.111px;">Where Used</div>
<div class="inp" style="left:489px;top:185px;width:273px;height:195px"></div>
<div class="th" style="left:490px;top:186px;width:271px"></div>
<div class="a" style="left:568px;top:187px;width:1px;height:16px;background:#c9c1a9"></div>
<div class="a" style="left:568px;top:204px;width:1px;height:18px;background:#c8c0b0"></div>
<div class="a" style="left:490px;top:204px;width:271px;height:1px;background:#c4bcae"></div>
<div class="a" style="left:490px;top:222px;width:271px;height:1px;background:#b8b0a2"></div>
<div class="t ar" id="h1" style="left:492px;top:186px;letter-spacing:0.2px;">Module</div>
<div class="t ar" id="h2" style="left:571px;top:186px;letter-spacing:0.111px;">Presentation Object</div>
<div class="t " id="c1" style="left:491px;top:205px;letter-spacing:-0.4px;color:#6a6a6a">GENLED</div>
<div class="t " id="c2" style="left:571px;top:205px;letter-spacing:-0.158px;color:#0000ff;text-decoration:underline">dlgLoadBudgetProcess</div>
<div class="t b" id="fdo" style="left:488px;top:385px;letter-spacing:0.1px;">Find Database Objects</div>
<div class="inp" style="left:489px;top:399px;width:219px;height:21px"></div>
<div class="a" style="left:715px;top:399px;width:46px;height:21px;border:1px solid #c9c7ba;border-radius:3px;background:#f5f4ea"></div>
<div class="t " id="find" style="left:727px;top:402px;letter-spacing:0.333px;color:#a7a699">Find</div>
<div class="inp" style="left:489px;top:426px;width:273px;height:440px"></div>
<div class="th" style="left:490px;top:427px;width:271px"></div>
<div class="a" style="left:663px;top:428px;width:1px;height:16px;background:#c9c1a9"></div>
<div class="t ar" id="h3" style="left:492px;top:427px;letter-spacing:-0.19px;">Logical Unit / Package</div>
<div class="t ar" id="h4" style="left:666px;top:427px;letter-spacing:-0.071px;">Database Object</div></body></html>
